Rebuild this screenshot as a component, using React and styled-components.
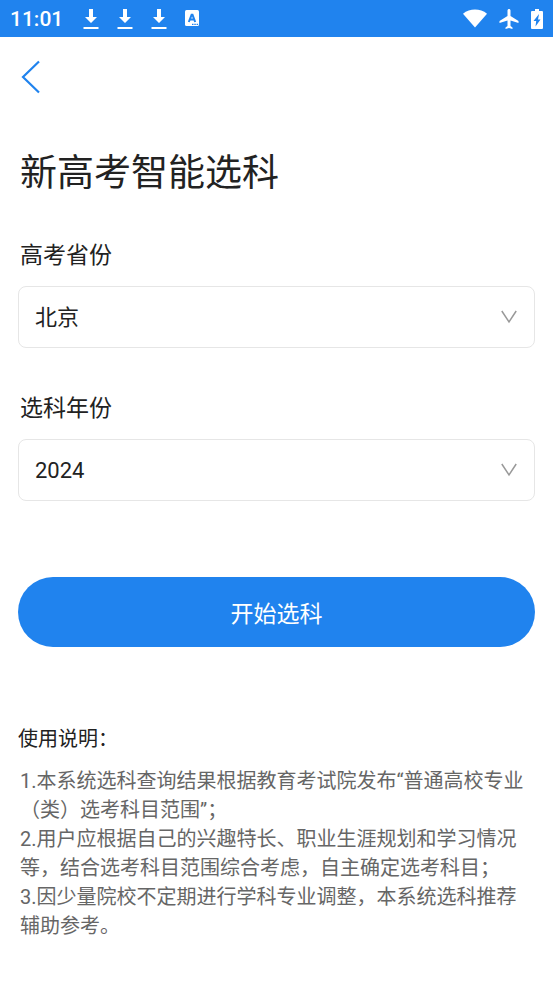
import React, { useState } from "react";
import styled, { createGlobalStyle } from "styled-components";

const blue = "#2083ee";
const ink = "#222222";

const GlobalStyle = createGlobalStyle`
  *, *::before, *::after { box-sizing: border-box; }
  body {
    margin: 0;
    background: #ffffff;
    color: ${ink};
    font-family: Roboto, "Noto Sans CJK SC", sans-serif;
  }
  button, select { font-family: inherit; }
`;

const Page = styled.div`
  min-height: 100vh;
  background: #ffffff;
`;

const StatusBar = styled.header`
  display: flex;
  align-items: center;
  justify-content: space-between;
  height: 37px;
  padding: 0 10px;
  background: ${blue};
  color: #ffffff;
`;

const StatusGroup = styled.div`
  display: flex;
  align-items: center;
  gap: ${(p) => p.$gap}px;
`;

const Clock = styled.time`
  margin-right: 2px;
  font-size: 21px;
  font-weight: 500;
  line-height: 38px;
`;

const Icon = styled.svg`
  display: block;
  flex: none;
`;

const NavBar = styled.nav`
  display: flex;
  align-items: center;
  height: 80px;
  padding: 0 20px;
`;

const BackButton = styled.button`
  display: flex;
  padding: 0;
  border: 0;
  background: none;
  color: ${blue};
  cursor: pointer;
`;

const Content = styled.main`
  padding: 30px 18px 40px;
`;

const Title = styled.h1`
  margin: 0;
  padding: 0 2px;
  font-size: 37px;
  font-weight: 400;
  line-height: 54px;
`;

const Form = styled.form`
  display: flex;
  flex-direction: column;
  gap: 44px;
  margin-top: 38px;
`;

const Field = styled.div`
  display: flex;
  flex-direction: column;
  gap: 13px;
`;

const Label = styled.label`
  padding: 0 2px;
  font-size: 23px;
  line-height: 34px;
`;

const SelectBox = styled.div`
  display: grid;
  grid-template-columns: 1fr 16px 18px;
  align-items: center;
  color: #999999;
`;

const Select = styled.select`
  grid-area: 1 / 1 / 2 / 4;
  width: 100%;
  height: 62px;
  padding: 0 48px 0 16px;
  appearance: none;
  border: 1px solid #e6e6e6;
  border-radius: 8px;
  background: #ffffff;
  color: ${ink};
  font-size: 22px;
`;

const Chevron = styled(Icon)`
  grid-area: 1 / 2;
  pointer-events: none;
`;

const SubmitButton = styled.button`
  height: 70px;
  margin-top: 32px;
  border: 0;
  border-radius: 35px;
  background: ${blue};
  color: #ffffff;
  font-size: 23px;
  cursor: pointer;
`;

const Notes = styled.section`
  margin-top: 77px;
`;

const NotesTitle = styled.h2`
  margin: 0 0 13px;
  font-size: 20px;
  font-weight: 400;
  line-height: 30px;
`;

const Note = styled.p`
  margin: 0;
  padding: 0 2px;
  color: #666666;
  font-size: 20px;
  line-height: 29px;
`;

function DownloadIcon() {
  return (
    <Icon width="16" height="22" viewBox="0 0 16 22" fill="currentColor" aria-hidden="true">
      <path d="M6 1h4v8h4l-6 6-6-6h4z" />
      <path d="M0.5 19h15v2h-15z" />
    </Icon>
  );
}

function KeyboardIcon() {
  return (
    <Icon width="14" height="17" viewBox="0 0 14 17" aria-hidden="true">
      <rect width="14" height="16" rx="1.5" fill="currentColor" />
      <path d="M3.8 12 6.6 4.8h.9L10.2 12M4.8 9.6h4.5" fill="none" stroke={blue} strokeWidth="2" />
      <path d="M7 14.300h1.500M9.300 14.300h1.500M11.600 14.300h1.500" stroke={blue} strokeWidth="1.2" />
    </Icon>
  );
}

function WifiIcon() {
  return (
    <Icon width="24" height="20" viewBox="0 0 24 20" fill="currentColor" aria-hidden="true">
      <path d="M12 18.500 0 4.700C6.800-.8 17.200-.8 24 4.700z" />
    </Icon>
  );
}

function PlaneIcon() {
  return (
    <Icon width="20" height="20" viewBox="2 2 19 20" fill="currentColor" aria-hidden="true">
      <path d="M21 16v-2l-8-5V3.500c0-.83-.67-1.500-1.500-1.500S10 2.670 10 3.500V9l-8 5v2l8-2.500V19l-2 1.500V22l3.500-1 3.500 1v-1.500L13 19v-5.500l8 2.500z" />
    </Icon>
  );
}

function BatteryIcon() {
  return (
    <Icon width="12" height="20" viewBox="0 0 12 20" aria-hidden="true">
      <path
        d="M4 0h4v2h2.700C11.500 2 12 2.500 12 3.300v15.400c0 .8-.5 1.300-1.300 1.300H1.300C.5 20 0 19.500 0 18.700V3.300C0 2.500.5 2 1.300 2H4z"
        fill="currentColor"
      />
      <path d="M8 5 2.500 12h2.700L4.500 17.500 9.500 10.500H7z" fill={blue} />
    </Icon>
  );
}

function SelectField({ id, label, options, value, onChange }) {
  return (
    <Field>
      <Label htmlFor={id}>{label}</Label>
      <SelectBox>
        <Select id={id} value={value} onChange={(e) => onChange(e.target.value)}>
          {options.map((option) => (
            <option key={option}>{option}</option>
          ))}
        </Select>
        <Chevron width="16" height="14" viewBox="0 0 16 14" aria-hidden="true">
          <path d="M.8 1 8 12 15.200 1" fill="none" stroke="currentColor" strokeWidth="1.5" />
        </Chevron>
      </SelectBox>
    </Field>
  );
}

const notes = [
  "1.本系统选科查询结果根据教育考试院发布“普通高校专业（类）选考科目范围”；",
  "2.用户应根据自己的兴趣特长、职业生涯规划和学习情况等，结合选考科目范围综合考虑，自主确定选考科目；",
  "3.因少量院校不定期进行学科专业调整，本系统选科推荐辅助参考。",
];

export default function App() {
  const [province, setProvince] = useState("北京");
  const [year, setYear] = useState("2024");

  return (
    <Page lang="zh-CN">
      <GlobalStyle />
      <StatusBar>
        <StatusGroup $gap={18}>
          <Clock>11:01</Clock>
          <DownloadIcon />
          <DownloadIcon />
          <DownloadIcon />
          <KeyboardIcon />
        </StatusGroup>
        <StatusGroup $gap={12}>
          <WifiIcon />
          <PlaneIcon />
          <BatteryIcon />
        </StatusGroup>
      </StatusBar>
      <NavBar>
        <BackButton type="button" aria-label="返回">
          <Icon width="20" height="34" viewBox="0 0 20 34" aria-hidden="true">
            <path d="M19 1.500 3 17l16 15.500" fill="none" stroke="currentColor" strokeWidth="2.200" />
          </Icon>
        </BackButton>
      </NavBar>
      <Content>
        <Title>新高考智能选科</Title>
        <Form onSubmit={(e) => e.preventDefault()}>
          <SelectField
            id="province"
            label="高考省份"
            options={["北京", "天津", "上海"]}
            value={province}
            onChange={setProvince}
          />
          <SelectField
            id="year"
            label="选科年份"
            options={["2024", "2023", "2022"]}
            value={year}
            onChange={setYear}
          />
          <SubmitButton type="submit">开始选科</SubmitButton>
        </Form>
        <Notes>
          <NotesTitle>使用说明：</NotesTitle>
          {notes.map((note) => (
            <Note key={note}>{note}</Note>
          ))}
        </Notes>
      </Content>
    </Page>
  );
}
